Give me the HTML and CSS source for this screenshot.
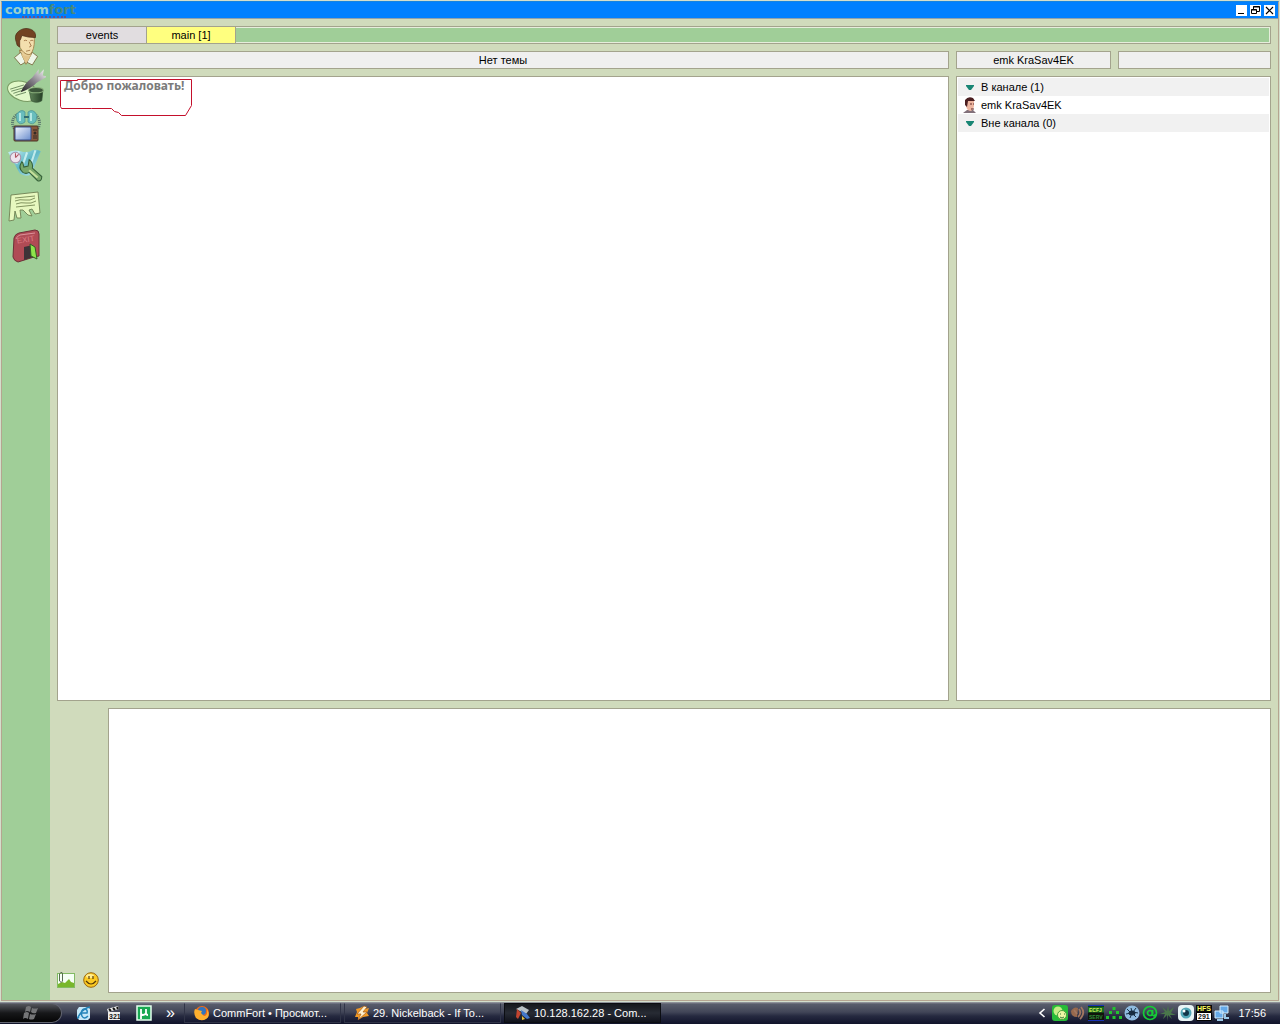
FILE: index.html
```html
<!DOCTYPE html>
<html lang="ru">
<head>
    <meta charset="UTF-8">
    <meta name="viewport" content="width=device-width, initial-scale=1.0">
    <title>CommFort</title>
    <link rel="stylesheet" href="styles.css">
</head>
<body>
    <div class="window">
        <header class="titlebar">
            <div class="logo"><span class="comm">comm</span><span class="fort">fort</span></div>
            <div class="window-buttons">
                <button aria-label="Minimize"><svg width="11" height="11" viewBox="0 0 11 11"><path d="M2 8.500h6" stroke="#000"/></svg></button>
                <button aria-label="Restore"><svg width="11" height="11" viewBox="0 0 11 11" fill="none" stroke="#000"><path d="M3.500 4V1.500h6v5H7M3 2h7M1.500 4.500h5v4h-5zM1 5h6"/></svg></button>
                <button aria-label="Close"><svg width="11" height="11" viewBox="0 0 11 11"><path d="M2 2l7 7M9 2l-7 7" stroke="#000" stroke-width="1.200"/></svg></button>
            </div>
        </header>

        <div class="content">
            <nav class="sidebar">
                <button aria-label="Users">
                    <svg width="40" height="40" viewBox="3 1 38 38">
                        <path d="M16 24l1 7 5 6 6-7-2-6z" fill="#e8cf9a" stroke="#9b7a43"/>
                        <path d="M11 31l6-5 5 11 6-11 5 4-5 8-6-3-5 3z" fill="#eef6e8" stroke="#76683a" stroke-width=".8"/>
                        <path d="M17 27l5 10 6-10-3 3-5-1z" fill="#e3c48b"/>
                        <path d="M14 10q2-5 9-4 7 0 7 8 0 10-4 14-4 1-8-4-4-5-4-14z" fill="#f3dfae" stroke="#a17d45" stroke-width=".8"/>
                        <path d="M13 17q-3-7 2-11 5-4 11-2 6 2 5 8-7 0-13-2-1 4-2 5l0 6q-3-1-3-4z" fill="#724322" stroke="#4d2c16" stroke-width=".7"/>
                        <path d="M20 15q2-1 3 0M26 15q2-1 3 0M22 25l4-1M25 16l2 4-2 1" stroke="#9d7043" fill="none" stroke-width=".8"/>
                    </svg>
                </button>
                <button aria-label="Clear">
                    <svg width="40" height="40" viewBox="1 2 38 38">
                        <defs>
                            <linearGradient id="broom" x1="0" y1="1" x2="1" y2="0"><stop offset="0" stop-color="#222"/><stop offset=".5" stop-color="#88838c"/><stop offset="1" stop-color="#fff"/></linearGradient>
                            <linearGradient id="pot"><stop offset="0" stop-color="#62875b"/><stop offset="1" stop-color="#243e25"/></linearGradient>
                        </defs>
                        <ellipse cx="17" cy="26" rx="15" ry="9" fill="#e1f8c9" stroke="#789a62" transform="rotate(18 17 26)"/>
                        <path d="M5 24l13-4M6 26l14-4M8 28l12-4M10 30l10-3" stroke="#5c7c51" stroke-width=".8"/>
                        <path d="M15 27q3-8 11-14l6-8 0 5 5-5-1 6 4 1-10 6q-4 5-15 9z" fill="url(#broom)"/>
                        <path d="M23 25l2 10q5 3 10 0l1-10z" fill="url(#pot)" stroke="#385637" stroke-width=".7"/>
                        <ellipse cx="29.500" cy="25" rx="7" ry="2.500" fill="#3c563a" stroke="#8bb07c"/>
                    </svg>
                </button>
                <button aria-label="Video">
                    <svg width="40" height="40" viewBox="0 0 40 40">
                        <defs><linearGradient id="screen" x1="0" y1="0" x2="1" y2="1"><stop offset="0" stop-color="#f5f8ff"/><stop offset="1" stop-color="#678bcc"/></linearGradient></defs>
                        <path d="M12 8q-7 4-5 12 1 4 5 5M28 8q7 4 5 12-1 4-5 5" fill="none" stroke="#56726c" stroke-width="3" stroke-dasharray="1 1"/>
                        <path d="M10 9q5-7 9-3v10q-5 4-8-1zM22 6q5-4 9 3l-1 6q-3 5-8 1z" fill="#68bdbd" stroke="#478f90" stroke-width=".7"/>
                        <path d="M14 7v8M25 7v8" stroke="#b5e8e3" stroke-width="2"/><path d="M18 11h5" stroke="#316c71" stroke-width="2"/>
                        <rect x="8" y="20" width="24" height="15" rx="1" fill="#88583d" stroke="#4d3526"/>
                        <rect x="9" y="21" width="16" height="13" rx="1" fill="url(#screen)" stroke="#344d88"/>
                        <path d="M27 24h4M27 30h4M27 32h4" stroke="#342b24"/><circle cx="29" cy="27" r="1.500" fill="#332b25"/>
                    </svg>
                </button>
                <button aria-label="Settings">
                    <svg width="40" height="40" viewBox="2 2 38 38">
                        <defs><linearGradient id="sheet" x1="0" x2="1" y2="1"><stop offset="0" stop-color="#c9f3f6"/><stop offset=".5" stop-color="#61b8c6"/><stop offset="1" stop-color="#bfeaec"/></linearGradient></defs>
                        <path d="M4 8q6-3 12-1t11-1q4-1 8 1l-9 22q-6 3-11-1z" fill="url(#sheet)"/>
                        <path d="M14 7l-2 12M22 8l-4 12M30 6l-5 15" stroke="#e7fffb" stroke-width="2" opacity=".7"/>
                        <circle cx="11" cy="13" r="5" fill="#eee4ee" stroke="#a794ab"/><path d="M11 13l3-3M11 13V9" stroke="#af525f"/>
                        <path d="M17 17q-4 6 1 10 3 2 6 0l8 8q4 1 4-4l-9-8q1-5-3-8l-1 6-4 1-1-4z" fill="#79a96b" stroke="#345f39"/>
                        <path d="M24 25l8 7" stroke="#c5df9c" stroke-width="2"/>
                    </svg>
                </button>
                <button aria-label="Notices">
                    <svg width="40" height="40" viewBox="0 0 40 40">
                        <path d="M5 9l27-3 2 21-5 1-3-5-3 1 3 6-4-1-5-5-3 0 1 8-4 0-2-7-1 9-5 1z" fill="#e7f8bf" stroke="#6e8052" stroke-width=".9"/>
                        <path d="M9 12l20-2M9 15q5-2 10-1t10-2M10 18q5-2 10-1t10-2M10 21l19-2" fill="none" stroke="#768854" stroke-width=".9"/>
                    </svg>
                </button>
                <button aria-label="Exit">
                    <svg width="40" height="40" viewBox="0 0 40 40">
                        <path d="M8 12q1-4 5-5l16-3q4 0 4 4v22l-5 1-16 5q-4-1-5-5z" fill="#b04b55" stroke="#6e3038"/>
                        <path d="M10 13q1-3 4-4l15-2" fill="none" stroke="#dc929a"/>
                        <text x="11" y="17" class="exit-text" transform="rotate(-8 14 16)">EXIT</text>
                        <path d="M18 21l9-2v12l-9 3z" fill="#3d3338"/>
                        <path d="M24 18l5 3 2 12-6-3z" fill="#8ee44b" stroke="#315f25"/>
                    </svg>
                </button>
            </nav>

            <main class="chat">
                <div class="tabs">
                    <button class="tab">events</button>
                    <button class="tab active">main [1]</button>
                    <div class="tabs-rest"></div>
                </div>

                <div class="topic-row">
                    <button class="field topic">Нет темы</button>
                    <div class="user-fields">
                        <button class="field nick">emk KraSav4EK</button>
                        <button class="field status" aria-label="Status"></button>
                    </div>
                </div>

                <div class="panels">
                    <section class="messages">
                        <p>Добро пожаловать!</p>
                        <svg class="marker" width="136" height="40" viewBox="0 0 136 40"><path d="M19.500 2.500h114v26l-6 10H63.500l-3-3-4-1-3-3H33.500L3.500 31.500l-1-2V3.500h17z" fill="none" stroke="#c4102c"/></svg>
                    </section>
                    <aside class="users">
                        <div class="group"><svg width="16" height="16" viewBox="0 0 16 16"><path d="M4 6h8v1l-3 4H7L4 7z" fill="#188574"/></svg>В канале (1)</div>
                        <div class="user"><svg width="16" height="16" viewBox="0 0 16 16"><path d="M1 16l4-3h6l3 3z" fill="#81707a"/><path d="M4 4q4-4 8-1v6q-1 5-4 5-4-1-4-6z" fill="#eeb6a0"/><path d="M3 8V3q3-4 8-2l2 3-7 0-1 6z" fill="#4a1e20"/><path d="M8 7h2M11 7h1M9 12h3" stroke="#602b2b"/></svg>emk KraSav4EK</div>
                        <div class="group"><svg width="16" height="16" viewBox="0 0 16 16"><path d="M4 6h8v1l-3 4H7L4 7z" fill="#188574"/></svg>Вне канала (0)</div>
                    </aside>
                </div>

                <div class="compose">
                    <div class="tools">
                        <button aria-label="Attach image"><svg width="18" height="16" viewBox="0 0 18 16"><rect x=".5" y="1.500" width="17" height="14" fill="#f5fff5" stroke="#82bb64"/><path d="M1 15v-3l4-2 3 1 4-4 2 3 3 1v4z" fill="#78b72b"/><path d="M2.500 2v7q2 3 3 0V1Q4-1 2.500 2" fill="none" stroke="#596c52"/></svg></button>
                        <button aria-label="Smile"><svg width="16" height="16" viewBox="0 0 16 16"><circle cx="8" cy="8" r="7.300" fill="#fbca23" stroke="#98660e"/><ellipse cx="7" cy="4" rx="4" ry="2" fill="#ffed91"/><path d="M6 4v3M10 4v3M3 9q5 6 10 0" fill="none" stroke="#553a09" stroke-width="1.200"/></svg></button>
                    </div>
                    <textarea aria-label="Message"></textarea>
                </div>
            </main>
        </div>
    </div>

    <footer class="taskbar">
        <button class="start" aria-label="Start"><svg width="18" height="16" viewBox="0 0 18 16" fill="#747577"><path d="M4 2q3-2 5 0L8 7Q5 5 3 7zM10 3q3 1 6 0l-2 5q-3 1-5-1zM2 8q3-2 5 0l-1 6q-3-2-5 0zM8 9q3 1 6 0l-2 5q-3 1-5 0z"/></svg></button>
        <div class="quick">
            <button aria-label="Internet"><svg width="16" height="16" viewBox="0 0 16 16"><path d="M3 2h9l2 2v9l-2 2H3l-2-3V5z" fill="#c5e7f8"/><path d="M12 11q-4 4-6 0-2-5 2-7 4 0 3 4H5M3 12Q0 15 4 9t10-7" fill="none" stroke="#2383b9" stroke-width="1.500"/></svg></button>
            <button aria-label="Media player"><svg width="16" height="16" viewBox="0 0 16 16"><path d="M1 4l11-3 1 3-11 3zM2 7h12v8H2z" fill="#eee"/><path d="M3 4l2 2M7 3l2 2M11 2l1 2" stroke="#111" stroke-width="2"/><text x="3" y="14" class="tiny dark">321</text></svg></button>
            <button aria-label="Torrent"><svg width="16" height="16" viewBox="0 0 16 16"><rect x="1" y="1" width="14" height="14" fill="#18a851" stroke="#e6fff0" stroke-width="1.500"/><path d="M5 14V4M5 8q0 2 2 2t3-2V4M10 8q0 2 2 2" fill="none" stroke="#fff" stroke-width="1.800"/></svg></button>
            <button class="more" aria-label="More">»</button>
        </div>
        <div class="tasks">
            <button class="task"><svg width="16" height="16" viewBox="0 0 16 16"><circle cx="8" cy="8" r="7" fill="#ef6b18"/><circle cx="8" cy="6" r="4" fill="#3374bd"/><path d="M1 4l3 1 4 1-1 2 3 3q4 0 3-7 4 7-1 10-5 3-10-1-3-5-1-9z" fill="#ffb02e"/></svg><span>CommFort • Просмот...</span></button>
            <button class="task"><svg width="16" height="16" viewBox="0 0 16 16"><path d="M10 1l1 3 4-1-2 5 2 3-6 1-5 3 0-3-3 0 2-5-1-3 4-1z" fill="#f39a25"/><path d="M10 1L3 9l4 0-3 6 9-8H9l4-5z" fill="#fff0cd" stroke="#a35a16" stroke-width=".7"/></svg><span>29. Nickelback - If To...</span></button>
            <button class="task active"><svg width="16" height="16" viewBox="0 0 16 16"><path d="M1 4l6-3 7 4-3 4z" fill="#b8c1c5"/><path d="M2 4l4 4-3 6-2-2z" fill="#c2442f"/><path d="M6 5l6 4 3 4-3 1-5-4z" fill="#4377c8"/><path d="M7 11l3 3-3 1z" fill="#e5c03e"/></svg><span>10.128.162.28 - Com...</span></button>
        </div>
        <div class="tray">
            <button class="tray-arrow" aria-label="Show hidden icons"><svg width="8" height="16" viewBox="0 0 8 16"><path d="M6.500 4L2 8l4.500 4" fill="none" stroke="#fff" stroke-width="1.600"/></svg></button>
            <svg width="16" height="16" viewBox="0 0 16 16"><rect width="16" height="16" rx="3" fill="#28bd38"/><circle cx="6" cy="6" r="4.500" fill="#c6ef86"/><circle cx="10" cy="10" r="4.500" fill="#eef6a4" stroke="#49a13c"/><path d="M8 9h1M12 9h1M8 12q2 2 4 0" stroke="#37783b" fill="none"/></svg>
            <svg width="16" height="16" viewBox="0 0 16 16"><path d="M1 6q3-5 7-3l-1 9q-6 0-6-6z" fill="#98694d"/><path d="M9 4q3 4-1 8M11 2q5 6-1 12M4 5l3 4" fill="none" stroke="#a27761" stroke-width="1.800"/></svg>
            <svg width="16" height="16" viewBox="0 0 16 16"><path fill="#10130b" d="M0 0h16v16H0z"/><path d="M0 .5h16M0 15.500h16" stroke="#1932b6"/><path d="M0 1.500h16v6H0z" fill="#176c24"/><text x="1" y="7" class="tiny small lime">ECFJ</text><text x="1" y="14" class="tiny small green">SERV</text></svg>
            <svg width="16" height="16" viewBox="0 0 16 16" fill="#21c52e"><path d="M6.500 2h3v3h-3zM3 6h3v3H3zM10 6h3v3h-3zM0 11h3v3H0zM6.500 11h3v3h-3zM13 11h3v3h-3z"/></svg>
            <svg width="16" height="16" viewBox="0 0 16 16"><circle cx="8" cy="8" r="7.500" fill="#8fbbe0"/><ellipse cx="8" cy="8" rx="3.500" ry="2.500" fill="#162a3b"/><path d="M3 4l4 4-5 1M12 3L9 7l5 1M6 13l2-5 4 4M7 3l1 4" stroke="#193047" fill="none"/></svg>
            <svg width="16" height="16" viewBox="0 0 16 16" fill="none" stroke="#16cb38" stroke-width="1.700"><circle cx="8" cy="8" r="6.500"/><circle cx="8" cy="8" r="2.500"/><path d="M10.500 5v5q2 2 3-1"/></svg>
            <svg width="16" height="16" viewBox="0 0 16 16"><path d="M8 0l1 6 5-4-3 6 5 2-6 0 2 4-4-4v6l-1-6-4 4 2-5-5 0 5-2-3-5 5 4z" fill="#4a774b"/></svg>
            <svg width="16" height="16" viewBox="0 0 16 16"><rect width="16" height="16" rx="4" fill="#e8f4f5"/><circle cx="8" cy="8" r="5.500" fill="#53a7b7"/><circle cx="8" cy="8" r="3" fill="#123649"/><circle cx="6" cy="6" r="1.500" fill="#fff"/></svg>
            <svg width="16" height="16" viewBox="0 0 16 16"><path fill="#080808" d="M0 0h16v8H0z"/><path fill="#fff" stroke="#000" d="M.5 7.500h15v8H.5z"/><text x="1" y="6" class="tiny yellow">HFS</text><text x="2" y="14" class="tiny dark">291</text></svg>
            <svg width="16" height="16" viewBox="0 0 16 16"><path d="M6 1h8v7H6zM1 6h8v7H1z" fill="#65a9e8" stroke="#d5eefe"/><path d="M11 9v3M3 15h6M10 13h5" stroke="#9bc8e8" stroke-width="2"/></svg>
            <time>17:56</time>
        </div>
    </footer>
</body>
</html>
```
FILE: styles.css
```css
* {
    box-sizing: border-box;
    margin: 0;
    padding: 0;
}
body {
    display: flex;
    flex-direction: column;
    height: 100vh;
    background-color: #d4dfcc;
    font-family: Tahoma, "Liberation Sans", sans-serif;
    font-size: 11px;
    line-height: 16px;
    color: #000;
    overflow: hidden;
}
button {
    font: inherit;
    color: inherit;
    border: none;
    background: none;
}
svg {
    display: block;
    flex-shrink: 0;
}
.window {
    flex: 1;
    min-height: 0;
    display: flex;
    flex-direction: column;
    margin: 1px;
    border: 1px solid #b5a590;
    border-top-color: #1684e0;
    background-color: #d0dbbc;
}
.titlebar {
    display: flex;
    justify-content: space-between;
    align-items: center;
    height: 17px;
    padding: 0 3px;
    background-color: #0080ff;
    border-bottom: 1px solid #8fa1ac;
}
.logo {
    position: relative;
    font-family: Verdana, "DejaVu Sans", sans-serif;
    font-size: 13px;
    font-weight: bold;
    line-height: 16px;
}
.logo::after {
    content: "";
    position: absolute;
    left: 17px;
    bottom: 0;
    width: 44px;
    border-bottom: 2px dotted #65518d;
}
.comm {
    color: #9bd0cb;
}
.fort {
    color: #468a80;
}
.window-buttons {
    display: flex;
    gap: 3px;
}
.window-buttons button {
    width: 11px;
    height: 11px;
    background-color: #fff;
}
.content {
    flex: 1;
    min-height: 0;
    display: flex;
}
.sidebar {
    display: flex;
    flex-direction: column;
    align-items: center;
    width: 48px;
    padding-top: 7px;
    background-color: #a0ce98;
}
.sidebar button {
    width: 40px;
    height: 40px;
}
.exit-text {
    font-family: "Liberation Sans", sans-serif;
    font-size: 8px;
    fill: #dc7d84;
}
.chat {
    flex: 1;
    min-width: 0;
    display: flex;
    flex-direction: column;
    gap: 7px;
    padding: 7px;
}
.tabs {
    display: flex;
    height: 18px;
    border: 1px solid #a3a38d;
}
.tab {
    width: 89px;
    background-color: #e1dde0;
    border-right: 1px solid #a3a38d;
}
.tab.active {
    background-color: #ffff7f;
}
.tabs-rest {
    flex: 1;
    background-color: #a0ce98;
    border: 1px solid #e6eedc;
    border-left: none;
}
.topic-row,
.panels {
    display: flex;
    gap: 7px;
}
.topic,
.messages {
    flex: 1;
}
.field {
    height: 18px;
    background-color: #efefef;
    border: 1px solid #a3a38d;
}
.user-fields {
    display: flex;
    gap: 7px;
    width: 315px;
}
.nick {
    width: 155px;
}
.status {
    flex: 1;
}
.panels {
    flex: 1;
    min-height: 0;
}
.messages,
.users {
    background-color: #fff;
    border: 1px solid #a3a38d;
}
.messages {
    position: relative;
    padding: 1px 6px;
    font-family: "Noto Sans", sans-serif;
    font-size: 12px;
    font-weight: bold;
    color: #7b7b7b;
}
.marker {
    position: absolute;
    top: 0;
    left: 0;
}
.users {
    width: 315px;
    padding: 1px;
}
.group,
.user {
    display: flex;
    align-items: center;
    gap: 3px;
    height: 18px;
    padding-left: 4px;
}
.group {
    background-color: #f1f1f1;
}
.compose {
    display: flex;
    height: 285px;
}
.tools {
    display: flex;
    align-items: flex-end;
    gap: 8px;
    width: 51px;
    padding-bottom: 5px;
}
.compose textarea {
    flex: 1;
    padding: 4px;
    border: 1px solid #a3a38d;
    background-color: #fff;
    font: inherit;
    resize: none;
    outline: none;
}
.taskbar {
    display: flex;
    align-items: center;
    height: 22px;
    color: #fff;
    background: linear-gradient(#a0a3a8, #595d6c 2px, #424658 10px, #262a40 14px, #10132a);
}
.start {
    display: flex;
    justify-content: center;
    align-items: center;
    width: 62px;
    height: 20px;
    border: 1px solid #626570;
    border-left: none;
    border-radius: 0 12px 12px 0;
    background: linear-gradient(#53555b, #17181a 50%, #050505);
}
.quick {
    display: flex;
    align-items: center;
    gap: 14px;
    width: 122px;
    padding-left: 14px;
}
.more {
    font-size: 16px;
}
.tasks {
    flex: 1;
    display: flex;
    gap: 3px;
}
.task {
    display: flex;
    align-items: center;
    gap: 3px;
    width: 157px;
    height: 20px;
    padding-left: 9px;
    border: 1px solid #303447;
    border-top-color: #6d7180;
    white-space: nowrap;
}
.task.active {
    padding-left: 10px;
    background: linear-gradient(#15181d, #272b34 50%, #10121b);
    border-color: #0b0d12;
}
.tray {
    display: flex;
    align-items: center;
    gap: 2px;
    padding-right: 14px;
}
.tray-arrow {
    margin-right: 4px;
}
.tray time {
    margin-left: 6px;
}
.tiny {
    font-family: "Liberation Sans", sans-serif;
    font-size: 7px;
    font-weight: bold;
}
.tiny.small {
    font-size: 5px;
}
.dark {
    fill: #111;
}
.lime {
    fill: #d7f057;
}
.green {
    fill: #2f8a38;
}
.yellow {
    fill: #ffff65;
}
```
